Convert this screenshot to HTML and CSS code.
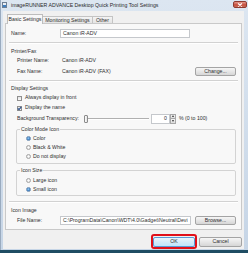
FILE: index.html
```html
<!DOCTYPE html>
<html>

<head>
    <title>imageRUNNER ADVANCE Desktop Quick Printing Tool Settings</title>
    <meta charset="UTF-8">
    <link rel="stylesheet" href="styles.css">
</head>

<body>
    <div class="window">
        <div class="titlebar">
            <svg class="app-icon" width="5" height="6" viewBox="0 0 5 6">
                <rect x="0.5" y="0.5" width="4" height="5" fill="#e8eef5" stroke="#6d7f95" stroke-width="1" />
                <rect x="1" y="3" width="3" height="2" fill="#3f7fc0" />
            </svg>
            <span class="title">imageRUNNER ADVANCE Desktop Quick Printing Tool Settings</span>
            <span class="close">
                <svg width="6" height="4" viewBox="0 0 6 4">
                    <path d="M1 0.5 L5 3.5 M5 0.5 L1 3.5" stroke="#fff" stroke-width="1.2" />
                </svg>
            </span>
        </div>
        <div class="client">
            <div class="tabs">
                <div class="tab active">Basic Settings</div>
                <div class="tab">Monitoring Settings</div>
                <div class="tab">Other</div>
            </div>
            <div class="panel">
                <div class="row name-row">
                    <span class="label">Name:</span>
                    <div class="textbox name-box">Canon iR-ADV</div>
                </div>
                <div class="sep"></div>
                <div class="head printer-head">Printer/Fax</div>
                <div class="row sub printer-row">
                    <span class="label">Printer Name:</span>
                    <span class="value">Canon iR-ADV</span>
                </div>
                <div class="row sub fax-row">
                    <span class="label">Fax Name:</span>
                    <span class="value">Canon iR-ADV (FAX)</span>
                    <div class="btn">Change...</div>
                </div>
                <div class="sep sep-display"></div>
                <div class="head display-head">Display Settings</div>
                <div class="row sub check-row">
                    <span class="check"></span>
                    <span>Always display in front</span>
                </div>
                <div class="row sub check-row">
                    <span class="check checked">
                        <svg width="5" height="5" viewBox="0 0 5 5">
                            <path d="M0.8 2.4 L2 3.7 L4.3 0.9" fill="none" stroke="#2a4f8a" stroke-width="1.1" />
                        </svg>
                    </span>
                    <span>Display the name</span>
                </div>
                <div class="row sub slider-row">
                    <span class="label slider-label">Background Transparency:</span>
                    <div class="slider">
                        <span class="thumb"></span>
                        <span class="track"></span>
                    </div>
                    <div class="spin-box">0</div>
                    <div class="spin-arrows">
                        <span class="arrow up"></span>
                        <span class="arrow down"></span>
                    </div>
                    <span class="range">% (0 to 100)</span>
                </div>
                <fieldset class="group color-group">
                    <legend>Color Mode Icon</legend>
                    <div class="radio-row"><span class="radio on"></span><span>Color</span></div>
                    <div class="radio-row"><span class="radio"></span><span>Black &amp; White</span></div>
                    <div class="radio-row"><span class="radio"></span><span>Do not display</span></div>
                </fieldset>
                <fieldset class="group size-group">
                    <legend>Icon Size</legend>
                    <div class="radio-row"><span class="radio"></span><span>Large icon</span></div>
                    <div class="radio-row"><span class="radio on"></span><span>Small icon</span></div>
                </fieldset>
                <div class="sep sep-image"></div>
                <div class="head image-head">Icon Image</div>
                <div class="row sub file-row">
                    <span class="label file-label">File Name:</span>
                    <div class="textbox file-box">C:\ProgramData\Canon\WDT\4.0\Gadget\Neutral\Devi</div>
                    <div class="btn">Browse...</div>
                </div>
            </div>
            <div class="buttons">
                <div class="highlight">
                    <div class="btn default">OK</div>
                </div>
                <div class="btn cancel">Cancel</div>
            </div>
        </div>
    </div>
    <div class="desktop"></div>
</body>

</html>
```

FILE: styles.css
```css
* {
    box-sizing: border-box;
}
html, body {
    margin: 0;
}
body {
    width: 248px;
    height: 253px;
    overflow: hidden;
    background: #1f4d63;
    font: 5.2px/1 "Liberation Sans", Arial, sans-serif;
    color: #2e2e2e;
}
.window {
    height: 250px;
    display: flex;
    flex-direction: column;
    background: linear-gradient(#dce6f1, #c6d5e6);
    border-left: 1px solid #9aabbf;
}
.titlebar {
    height: 11px;
    display: flex;
    align-items: center;
    padding-left: 1px;
}
.app-icon {
    margin-top: -1px;
}
.title {
    margin-left: 4px;
    color: #2a2a2a;
}
.close {
    margin-left: auto;
    margin-right: 1px;
    margin-top: -2px;
    width: 14px;
    height: 7px;
    border-radius: 2px;
    border: 1px solid #8e3a30;
    background: linear-gradient(#e59a8c, #c7503f 55%, #c86a55);
    display: flex;
    align-items: center;
    justify-content: center;
}
.client {
    flex: 1;
    margin: 0 4px 1px 2px;
    background: #f0f0f0;
    display: flex;
    flex-direction: column;
}
.tabs {
    margin-top: 3px;
    height: 9px;
    padding-left: 4px;
    display: flex;
    align-items: flex-end;
    position: relative;
    z-index: 1;
}
.tab {
    height: 7px;
    padding-top: 1px;
    border: 1px solid #c4c4c4;
    border-bottom: none;
    background: linear-gradient(#f4f4f4, #e4e4e4);
    display: flex;
    justify-content: center;
    align-items: center;
}
.tab:nth-child(1) {
    width: 36px;
}
.tab:nth-child(2) {
    width: 50px;
    border-left: none;
}
.tab:nth-child(3) {
    width: 20px;
    border-left: none;
}
.tab.active {
    height: 10px;
    margin-bottom: -1px;
    background: #f8f8f8;
    border-color: #bdbdbd;
}
.panel {
    height: 207px;
    margin: 0 2px;
    background: #f8f8f8;
    border: 1px solid #c9c9c9;
    padding: 5px 5px 0 5px;
    display: flex;
    flex-direction: column;
}
.row {
    display: flex;
    align-items: center;
}
.sub {
    padding-left: 6px;
}
.label {
    flex: none;
}
.name-row {
    height: 9px;
}
.name-row .label {
    width: 49px;
}
.textbox {
    height: 9px;
    background: #fff;
    border: 1px solid #c5c8cc;
    padding-left: 2px;
    display: flex;
    align-items: center;
    white-space: nowrap;
    overflow: hidden;
}
.name-box {
    width: 130px;
}
.sep {
    margin: 4px -2px 0 -2px;
    height: 2px;
    border-top: 1px solid #d2d2d2;
    border-bottom: 1px solid #fff;
}
.head {
    height: 9px;
    display: flex;
    align-items: center;
}
.printer-head {
    margin-top: 3px;
}
.printer-row {
    height: 10px;
}
.printer-row .label,
.fax-row .label {
    width: 45px;
}
.fax-row {
    height: 11px;
}
.value {
    flex: 1;
}
.btn {
    width: 41px;
    height: 9px;
    border: 1px solid #a4a4a4;
    border-radius: 2px;
    background: linear-gradient(#f6f6f6, #e6e6e6 50%, #d6d6d6);
    display: flex;
    align-items: center;
    justify-content: center;
    flex: none;
}
.sep-display {
    margin-top: 3px;
}
.display-head {
    margin-top: 3px;
    height: 8px;
}
.check-row {
    height: 10px;
}
.check {
    width: 5px;
    height: 5px;
    margin-right: 3px;
    border: 1px solid #8f8f8f;
    background: linear-gradient(#e4e4e4, #fafafa);
    display: flex;
    align-items: center;
    justify-content: center;
}
.check svg {
    margin: -1px;
}
.slider-row {
    height: 11px;
}
.slider-label {
    width: 67px;
}
.slider {
    width: 67px;
    height: 9px;
    display: flex;
    align-items: center;
}
.thumb {
    width: 4px;
    height: 8px;
    border: 1px solid #8c8c8c;
    border-radius: 1px;
    background: linear-gradient(90deg, #fdfdfd, #e2e2e2);
    flex: none;
}
.track {
    flex: 1;
    height: 2px;
    border-top: 1px solid #b0b0b0;
    border-bottom: 1px solid #fff;
    margin-right: 2px;
}
.spin-box {
    width: 19px;
    height: 10px;
    background: #fff;
    border: 1px solid #c5c8cc;
    display: flex;
    align-items: center;
    justify-content: flex-end;
    padding-right: 2px;
}
.spin-arrows {
    width: 6px;
    height: 10px;
    display: flex;
    flex-direction: column;
}
.arrow {
    flex: 1;
    border: 1px solid #a8a8a8;
    background: linear-gradient(#f6f6f6, #dcdcdc);
    display: flex;
    align-items: center;
    justify-content: center;
}
.arrow.down {
    border-top: none;
}
.arrow::after {
    content: "";
    border-left: 1.5px solid transparent;
    border-right: 1.5px solid transparent;
}
.arrow.up::after {
    border-bottom: 2px solid #333;
}
.arrow.down::after {
    border-top: 2px solid #333;
}
.range {
    margin-left: 3px;
}
.group {
    margin: 2px 0 0 5px;
    padding: 2px 0 2px 9px;
    border: 1px solid #d3d3d3;
    border-radius: 2px;
    min-width: 0;
}
.group legend {
    margin-left: -6px;
    padding: 0 1px;
    line-height: 6px;
    height: 6px;
}
.size-group {
    margin-top: 3px;
    padding-top: 3px;
    padding-bottom: 1px;
}
.radio-row {
    height: 9px;
    display: flex;
    align-items: center;
}
.radio {
    width: 5px;
    height: 5px;
    margin-right: 2px;
    border-radius: 50%;
    border: 1px solid #a4a4a4;
    background: radial-gradient(#fdfdfd, #dedede);
}
.radio.on {
    border-color: #6f8fb3;
    background: radial-gradient(circle at 45% 40%, #9fd0f6, #2f78c0 70%);
}
.sep-image {
    margin-top: 5px;
}
.image-head {
    margin-top: 4px;
    height: 8px;
}
.file-row {
    height: 11px;
}
.file-label {
    width: 43px;
}
.file-box {
    width: 131px;
    margin-right: 4px;
}
.buttons {
    margin-top: 4px;
    height: 15px;
    padding-right: 2px;
    display: flex;
    justify-content: flex-end;
    align-items: center;
}
.highlight {
    width: 46px;
    height: 15px;
    border: 2px solid #e0101a;
    border-radius: 3px;
    display: flex;
    align-items: center;
    justify-content: center;
    margin-right: 2px;
}
.btn.default {
    width: 42px;
    height: 10px;
    border-color: #5a9bd6;
    background: linear-gradient(#eaf6fd, #d4ebfa 50%, #bee6fd);
}
.cancel {
    width: 43px;
    height: 10px;
}
.desktop {
    height: 3px;
}
```
